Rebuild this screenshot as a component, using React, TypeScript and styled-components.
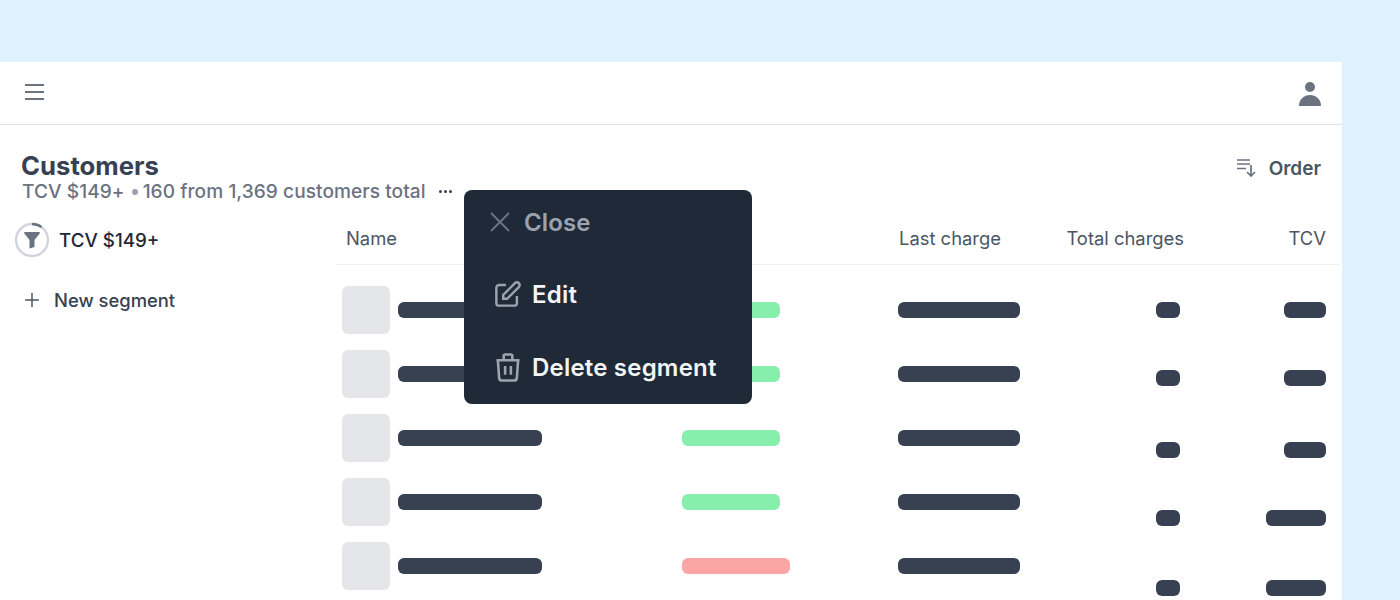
import React from 'react'
import styled, { createGlobalStyle } from 'styled-components'
import { Plus } from 'lucide-react'

const GlobalStyle = createGlobalStyle`
  html, body {
    margin: 0;
    padding: 0;
    background: #dff0ff;
    font-family: Inter, "Liberation Sans", sans-serif;
  }
`

const Page = styled.div`
  height: 600px;
  overflow: hidden;
  padding-top: 62px;
  box-sizing: border-box;
`

const Shell = styled.div`
  position: relative;
  width: 1342px;
  height: 538px;
  background: #ffffff;
`

const TopBar = styled.header`
  display: flex;
  align-items: center;
  justify-content: space-between;
  box-sizing: border-box;
  height: 63px;
  padding: 0 21px 0 24px;
  border-bottom: 1px solid #e0e1e4;
`

const Heading = styled.div`
  display: flex;
  justify-content: space-between;
  padding: 27px 21px 0 22px;
`

const Title = styled.h1`
  margin: 0 0 0 -1px;
  font-size: 25.7px;
  line-height: 28px;
  font-weight: 700;
  color: #374151;
`

const Subtitle = styled.div`
  display: flex;
  align-items: center;
  height: 24px;
  margin-top: -1px;
  font-size: 19.1px;
  font-weight: 500;
  letter-spacing: 0.06px;
  color: #6b7280;
`

const Bullet = styled.i`
  width: 6px;
  height: 6px;
  margin: 2px 5px 0 7px;
  border-radius: 50%;
  background: #9ca3af;
`

const Dots = styled.span`
  display: flex;
  gap: 2px;
  margin-left: 13px;
`

const Dot = styled.i`
  width: 3px;
  height: 3px;
  border-radius: 50%;
  background: #374151;
`

const OrderButton = styled.div`
  display: flex;
  align-items: center;
  gap: 13px;
  height: 30px;
  margin-top: 1px;
  font-size: 19px;
  font-weight: 600;
  color: #4b5563;
`

const Body = styled.div`
  display: flex;
  margin-top: 12px;
`

const Sidebar = styled.aside`
  width: 336px;
  flex: none;
  padding: 7px 0 0 14px;
  box-sizing: border-box;
`

const SegmentRow = styled.div`
  display: flex;
  align-items: center;
  gap: 9px;
  height: 36px;
  font-size: 18.8px;
  font-weight: 500;
  color: #1f2937;
`

const NewSegment = styled.div`
  display: flex;
  align-items: center;
  gap: 11px;
  height: 24px;
  margin: 30px 0 0 7px;
  font-size: 18.4px;
  font-weight: 500;
  color: #374151;
`

const Table = styled.section`
  flex: 1;
  padding-right: 2px;
`

const HeaderRow = styled.div`
  display: grid;
  grid-template-columns: 553px 1fr 168px 142px;
  align-items: center;
  box-sizing: border-box;
  height: 50px;
  padding: 0 14px 4px 10px;
  border-bottom: 1px solid #f0f1f3;
  font-size: 18.4px;
  color: #4b5563;
`

const HeaderCell = styled.div<{ $right?: boolean }>`
  text-align: ${(p) => (p.$right ? 'right' : 'left')};
`

const Rows = styled.div`
  display: grid;
  grid-auto-rows: 48px;
  row-gap: 16px;
  padding: 21px 14px 0 6px;
`

const Row = styled.div`
  display: grid;
  grid-template-columns: 340px 216px 258px 1fr 146px;
  grid-template-rows: 48px;
`

const NameCell = styled.div`
  display: flex;
  align-items: center;
  gap: 8px;
`

const Avatar = styled.div`
  width: 48px;
  height: 48px;
  border-radius: 6px;
  background: #e5e6ea;
`

const Bar = styled.div<{ $w: number; $tone?: 'dark' | 'green' | 'red' }>`
  width: ${(p) => p.$w}px;
  height: 16px;
  border-radius: 6px;
  background: ${(p) =>
    p.$tone === 'green' ? '#86efac' : p.$tone === 'red' ? '#fca5a5' : '#374151'};
`

const BarCell = styled.div<{ $drop?: number; $right?: boolean }>`
  display: flex;
  justify-content: ${(p) => (p.$right ? 'flex-end' : 'flex-start')};
  margin-top: ${(p) => 16 + (p.$drop ?? 0)}px;
`

const Menu = styled.div`
  position: absolute;
  top: 128px;
  left: 464px;
  width: 288px;
  height: 214px;
  box-sizing: border-box;
  padding: 14px 0 0 25px;
  border-radius: 8px;
  background: #1f2937;
`

const MenuClose = styled.div`
  display: flex;
  align-items: center;
  gap: 13px;
  height: 36px;
  margin-bottom: 36px;
  font-size: 24px;
  font-weight: 600;
  letter-spacing: 0.1px;
  color: #9ca3af;
`

const MenuItem = styled.div`
  display: flex;
  align-items: center;
  gap: 11px;
  height: 36px;
  margin-left: 6px;
  font-size: 24px;
  font-weight: 600;
  letter-spacing: 0.2px;
  color: #f3f4f6;

  & + & {
    margin-top: 37px;
  }
`

const rows = [
  { status: 98, tone: 'green', totalDrop: 0, tcv: 42, tcvDrop: 0 },
  { status: 98, tone: 'green', totalDrop: 4, tcv: 42, tcvDrop: 4 },
  { status: 98, tone: 'green', totalDrop: 12, tcv: 42, tcvDrop: 12 },
  { status: 98, tone: 'green', totalDrop: 16, tcv: 60, tcvDrop: 16 },
  { status: 108, tone: 'red', totalDrop: 22, tcv: 60, tcvDrop: 22 },
] as const

function MenuIcon() {
  return (
    <svg width="21" height="22" viewBox="0 0 21 22" fill="none" stroke="#6b7280" strokeWidth="2.2">
      <path d="M1 3h19M1 10h19M1 17h19" />
    </svg>
  )
}

function UserIcon() {
  return (
    <svg width="22" height="26" viewBox="0 0 22 26" fill="#6b7280">
      <circle cx="11" cy="7" r="5" />
      <path d="M0 26c0-7 5-11 11-11s11 4 11 11z" />
    </svg>
  )
}

function OrderIcon() {
  return (
    <svg width="19" height="18" viewBox="0 0 19 18" fill="none" stroke="#6b7280" strokeWidth="1.7">
      <path d="M0 1h13M0 5h13M0 9.5h9M14 6v11M10 13l4 4 4-4" />
    </svg>
  )
}

function FunnelRing() {
  return (
    <svg width="36" height="36" viewBox="0 0 36 36" fill="none">
      <circle cx="18" cy="18" r="16" stroke="#d1d5db" strokeWidth="2.4" />
      <path d="M18 2a16 16 0 0 1 9.5 3.1" stroke="#6b7280" strokeWidth="2.4" />
      <path
        d="M11 10h14c.8 0 1.2.9.7 1.5L20.5 18v7l-5 1.5V18l-5.2-6.5c-.5-.6-.1-1.5.7-1.500z"
        fill="#6b7280"
      />
    </svg>
  )
}

function CloseIcon() {
  return (
    <svg width="22" height="22" viewBox="0 0 22 22" fill="none" stroke="#6b7280" strokeWidth="2">
      <path d="M2 2l18 18M20 2L2 20" />
    </svg>
  )
}

function EditIcon() {
  return (
    <svg width="26" height="26" viewBox="3 2 19 19" fill="none" stroke="#9ca3af" strokeWidth="1.8">
      <path d="M11 5H6a2 2 0 00-2 2v11a2 2 0 002 2h11a2 2 0 002-2v-5m-1.414-9.414a2 2 0 112.828 2.828L11.828 15H9v-2.828l8.586-8.586z" />
    </svg>
  )
}

function TrashIcon() {
  return (
    <svg width="26" height="29" viewBox="3 2 18 20" fill="none" stroke="#9ca3af" strokeWidth="1.8">
      <path d="M19 7l-.867 12.142A2 2 0 0116.138 21H7.862a2 2 0 01-1.995-1.858L5 7m5 4v6m4-6v6m1-10V4a1 1 0 00-1-1h-4a1 1 0 00-1 1v3M4 7h16" />
    </svg>
  )
}

export default function App() {
  return (
    <Page>
      <GlobalStyle />
      <Shell>
        <TopBar>
          <MenuIcon />
          <UserIcon />
        </TopBar>
        <Heading>
          <div>
            <Title>Customers</Title>
            <Subtitle>
              <span>TCV $149+</span>
              <Bullet />
              <span>160 from 1,369 customers total</span>
              <Dots>
                <Dot />
                <Dot />
                <Dot />
              </Dots>
            </Subtitle>
          </div>
          <OrderButton>
            <OrderIcon />
            Order
          </OrderButton>
        </Heading>
        <Body>
          <Sidebar>
            <SegmentRow>
              <FunnelRing />
              TCV $149+
            </SegmentRow>
            <NewSegment>
              <Plus size={22} strokeWidth={1.6} color="#4b5563" />
              New segment
            </NewSegment>
          </Sidebar>
          <Table>
            <HeaderRow>
              <HeaderCell>Name</HeaderCell>
              <HeaderCell>Last charge</HeaderCell>
              <HeaderCell $right>Total charges</HeaderCell>
              <HeaderCell $right>TCV</HeaderCell>
            </HeaderRow>
            <Rows>
              {rows.map((row, i) => (
                <Row key={i}>
                  <NameCell>
                    <Avatar />
                    <Bar $w={144} />
                  </NameCell>
                  <BarCell>
                    <Bar $w={row.status} $tone={row.tone} />
                  </BarCell>
                  <BarCell>
                    <Bar $w={122} />
                  </BarCell>
                  <BarCell $right $drop={row.totalDrop}>
                    <Bar $w={24} />
                  </BarCell>
                  <BarCell $right $drop={row.tcvDrop}>
                    <Bar $w={row.tcv} />
                  </BarCell>
                </Row>
              ))}
            </Rows>
          </Table>
        </Body>
        <Menu>
          <MenuClose>
            <CloseIcon />
            Close
          </MenuClose>
          <MenuItem>
            <EditIcon />
            Edit
          </MenuItem>
          <MenuItem>
            <TrashIcon />
            Delete segment
          </MenuItem>
        </Menu>
      </Shell>
    </Page>
  )
}
